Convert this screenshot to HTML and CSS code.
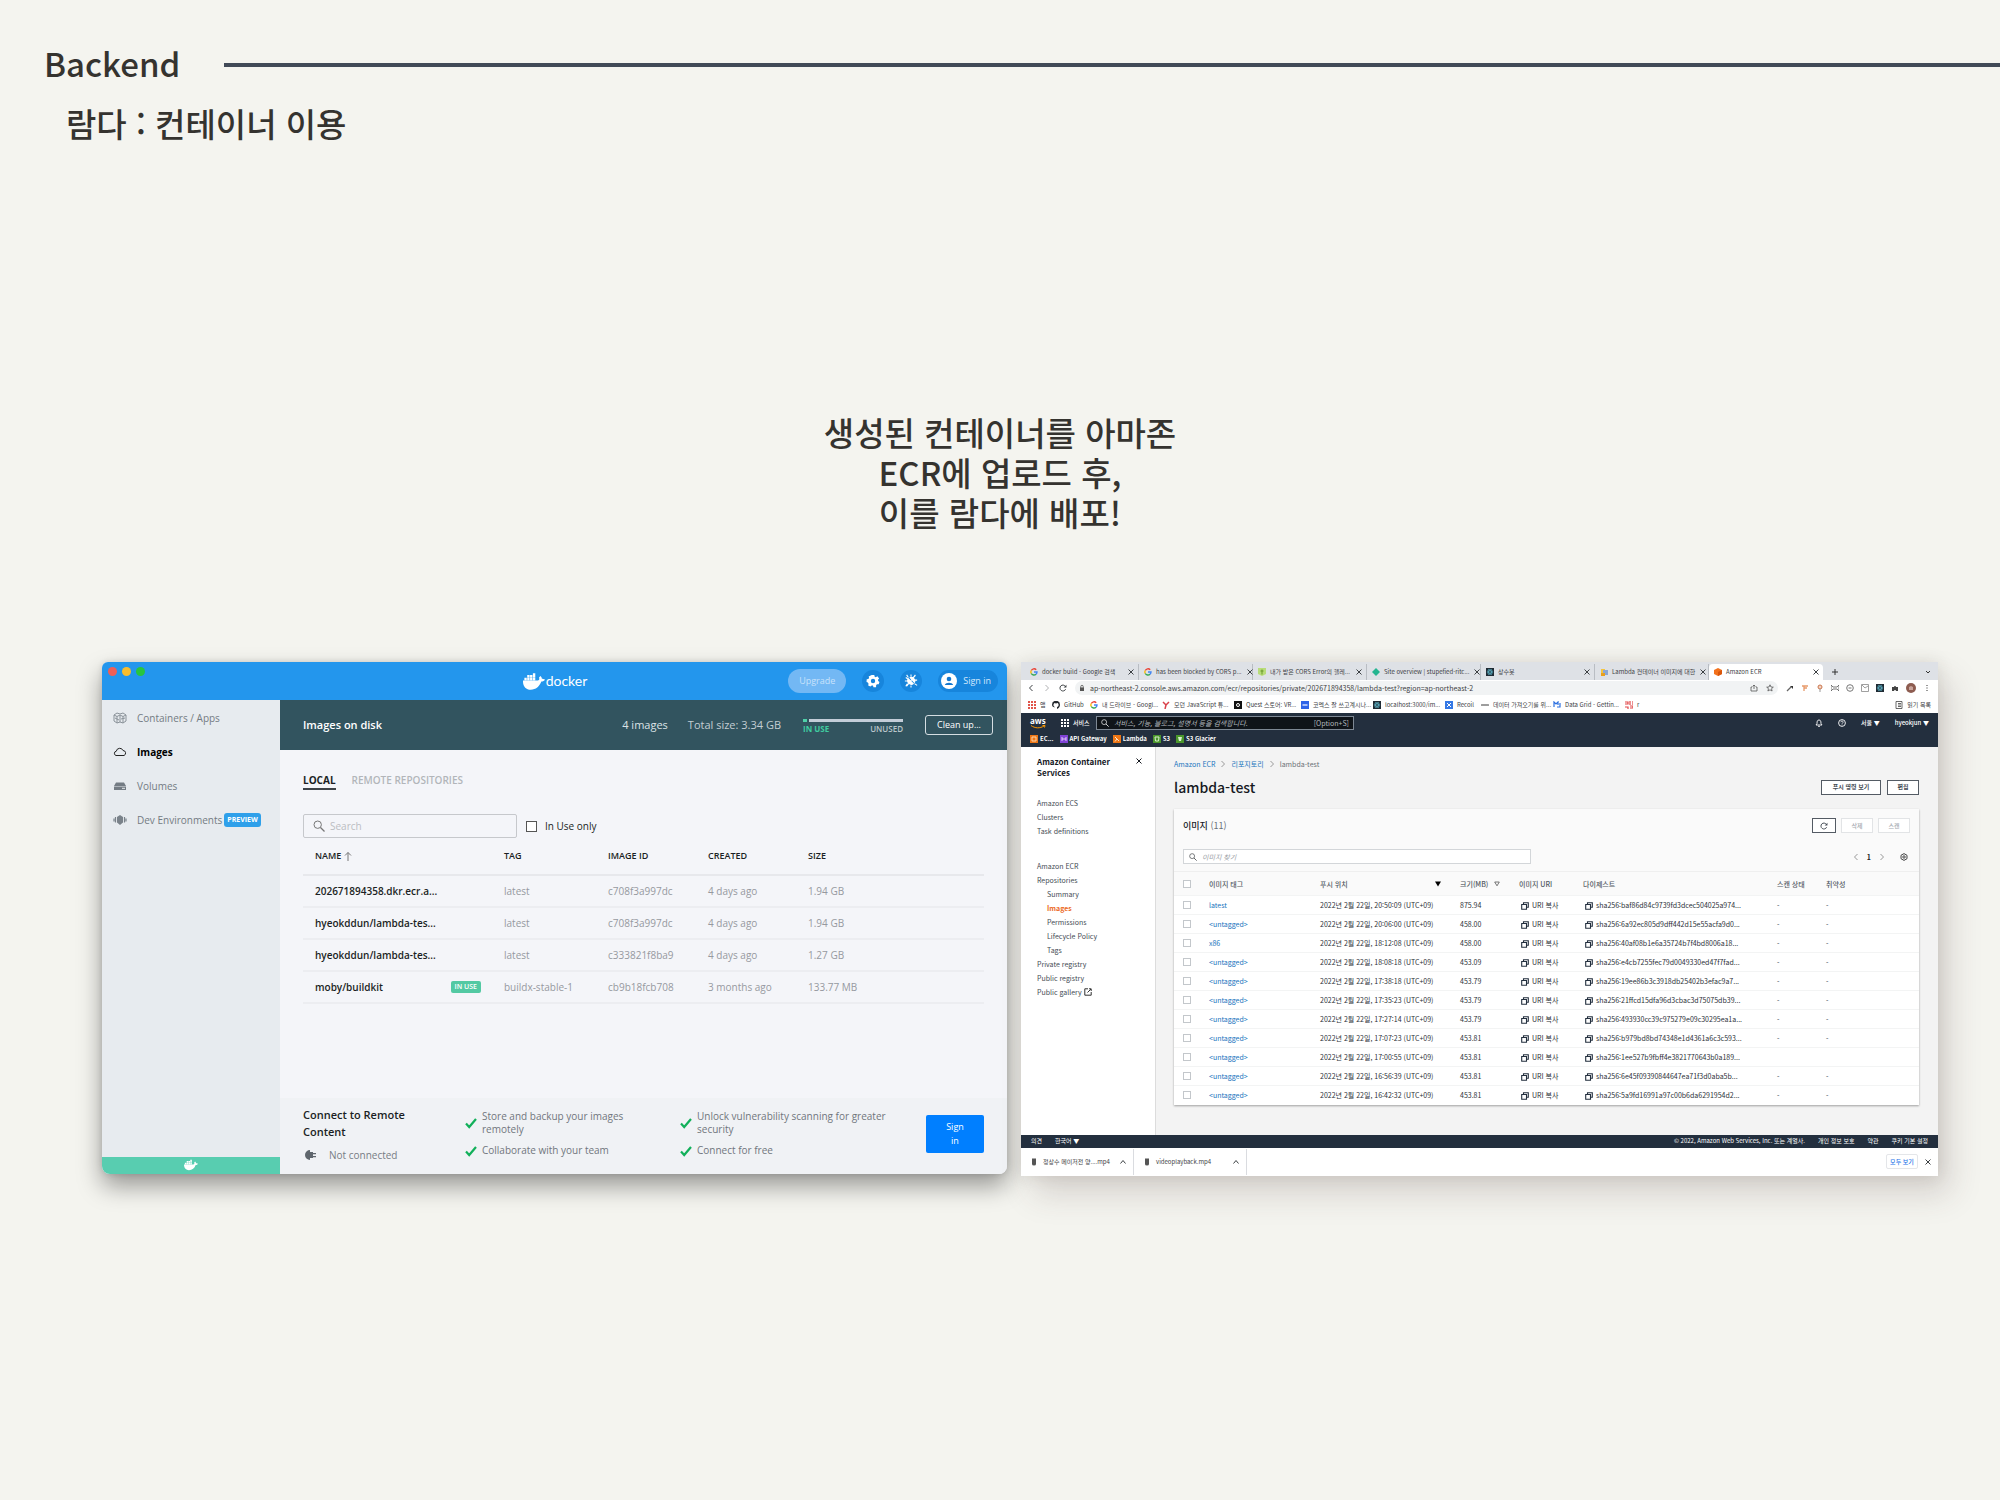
FILE: index.html
```html
<!DOCTYPE html>
<html lang="ko">
<head>
<meta charset="utf-8">
<meta name="viewport" content="width=device-width, initial-scale=1">
<title>Backend</title>
<link rel="stylesheet" href="styles.css">
</head>
<body>
<svg class="defs" aria-hidden="true">
  <symbol id="whale" viewBox="0 0 24 18"><path d="M0 8h16c2 0 2-2 1.500-3.500L19 3c1.200 1 1.500 2 1.600 3 1 0 2 .2 3.400.9-.8 1.700-2.200 2.200-4 2.200C18 14.500 14 18 8.500 18 3 18-.3 14 0 8zM1.500 5h2.600v2.500H1.500zM4.600 5h2.600v2.500H4.600zM7.700 5h2.600v2.500H7.700zM10.800 5h2.600v2.500h-2.600zM4.600 2h2.600v2.500H4.600zM7.700 2h2.600v2.500H7.700zM10.800 0h2.600v4.500h-2.600z"/></symbol>
  <symbol id="check" viewBox="0 0 12 12"><path d="M1 6.500 4.200 10 11 2" fill="none" stroke="#12b05a" stroke-width="2.200"/></symbol>
  <symbol id="copy" viewBox="0 0 8 8"><path d="M2.500 2V.7h4.800v4.600H6M.7 2.500H5.500v4.800H.7z" fill="none" stroke="#232f3e" stroke-width="1.100"/></symbol>
  <symbol id="lens" viewBox="0 0 12 12"><circle cx="4.700" cy="4.700" r="3.700" fill="none" stroke="currentColor"/><path d="m7.500 7.500 4 4" stroke="currentColor" stroke-width="1.200"/></symbol>
  <symbol id="google" viewBox="0 0 8 8"><g fill="none" stroke-width="1.400"><path d="M1.300 2.500A3 3 0 0 1 6.200 1.800" stroke="#ea4335"/><path d="M1.300 2.500a3 3 0 0 0 0 3" stroke="#fbbc05"/><path d="M1.300 5.500A3 3 0 0 0 6 6.200" stroke="#34a853"/><path d="M6 6.200A3 3 0 0 0 7 4H4" stroke="#4285f4"/></g></symbol>
  <symbol id="react" viewBox="0 0 8 8"><path fill="#1f2a33" d="M0 0h8v8H0z"/><g fill="none" stroke="#5fb6c9" stroke-width=".6"><ellipse cx="4" cy="4" rx="3" ry="1.200"/><ellipse cx="4" cy="4" rx="3" ry="1.200" transform="rotate(60 4 4)"/><ellipse cx="4" cy="4" rx="3" ry="1.200" transform="rotate(120 4 4)"/></g></symbol>
  <symbol id="x" viewBox="0 0 8 8"><path d="m1.500 1.500 5 5m0-5-5 5" stroke="currentColor" fill="none"/></symbol>
  <symbol id="left" viewBox="0 0 8 8"><path d="M5.500 1 2.500 4l3 3" stroke="currentColor" fill="none"/></symbol>
  <symbol id="right" viewBox="0 0 8 8"><path d="m2.500 1 3 3-3 3" stroke="currentColor" fill="none"/></symbol>
  <symbol id="up" viewBox="0 0 8 8"><path d="m1.500 5.500 2.500-3 2.500 3" stroke="currentColor" fill="none"/></symbol>
  <symbol id="reload" viewBox="0 0 10 10"><path d="M8.300 6.500A3.700 3.700 0 1 1 8 3" stroke="currentColor" stroke-width="1.200" fill="none"/><path d="M9.300.8v3.500H5.800z" fill="currentColor"/></symbol>
  <symbol id="gear" viewBox="0 0 16 16"><path fill="currentColor" fill-rule="evenodd" d="M6.500 1h3l.4 2 1.300.6L13 2.500 15 5l-1.300 1.500.2 1.500 1.500 1-.9 2.800-1.900-.1-1 1L11.500 15h-3L8 13.200 6.500 13 5 14.300 2.500 13l.4-2-.8-1.200L.6 9l.2-3 1.900-.4.9-1.200-.6-1.600zM8 5.500a2.500 2.500 0 1 0 0 5 2.500 2.500 0 0 0 0-5z"/></symbol>
  <symbol id="file" viewBox="0 0 8 8"><path d="M2 .5h4v5.500a2 1.500 0 0 1-4 0z" fill="#555"/></symbol>
</svg>

<header class="slide-head">
  <h1>Backend</h1>
  <hr class="rule">
</header>
<h2 class="subtitle">람다 : 컨테이너 이용</h2>
<p class="message">생성된 컨테이너를 아마존<br>ECR에 업로드 후,<br>이를 람다에 배포!</p>

<main class="shots">
  <section class="docker" aria-label="Docker Desktop">
    <header class="d-bar">
      <div class="lights"><i class="red"></i><i class="yellow"></i><i class="green"></i></div>
      <div class="d-logo"><svg class="d-whale"><use href="#whale"/></svg>docker</div>
      <div class="d-actions">
        <button class="upgrade">Upgrade</button>
        <button class="round" aria-label="Settings"><svg class="i14"><use href="#gear"/></svg></button>
        <button class="round" aria-label="Troubleshoot"><svg class="i14" viewBox="0 0 16 16"><path d="M5 4.500 11.500 11A4.500 4.500 0 0 1 5 4.500zM6 4a4.500 4.500 0 0 1 6 6.500z" fill="#fff"/><path d="m3 1 2 3M8 .5V3m5-1.500L11 4m4 3h-3m3 6-3-2M8 13v2.500M4 11l-2 3M1 8h3m-2-4 3 2m8-5L3 14" stroke="#fff" stroke-width="1.200"/></svg></button>
        <button class="signin-pill"><svg class="i16" viewBox="0 0 16 16"><circle cx="8" cy="8" r="8" fill="#fff"/><circle cx="8" cy="6" r="2.300" fill="#1478cf"/><path d="M3.800 12c1-3 7.400-3 8.400 0z" fill="#1478cf"/></svg>Sign in</button>
      </div>
    </header>
    <div class="d-body">
      <aside class="d-side">
        <nav>
          <a href="#"><svg class="i14" viewBox="0 0 14 14"><path d="m1 4 3-2 3 1 3-1 3 2v6l-3 2-3-1-3 1-3-2zM1 4l3 1.500L7 4l3 1.500L13 4M4 5.500V12m6-6.500V12M7 4v7M2 7l4 2m2-1 4-1" fill="none" stroke="#8a9299"/></svg>Containers / Apps</a>
          <a href="#" class="on"><svg class="i14" viewBox="0 0 14 14"><path d="M3 10.500a2.200 2.200 0 0 1 .3-4.300 3.500 3.500 0 0 1 6.700-.7 2.600 2.600 0 0 1 1 5z" fill="none" stroke="#222"/></svg>Images</a>
          <a href="#"><svg class="i14" viewBox="0 0 14 14"><path d="m3 3.500h8l2 3.500H1zM1 7.500h12v3.500H1z" fill="#747c84"/><path d="M9 9.300h3" stroke="#e8ebee"/></svg>Volumes</a>
          <a href="#"><svg class="i14" viewBox="0 0 14 14"><path d="m4 4 3-2 3 2v5.500L7 12 4 9.500z" fill="#7a828a"/><path d="M1 5.500v3M2.500 4v5.500m9-5.500v5.500M13 5.500v3" stroke="#7a828a" stroke-width="1.200"/></svg>Dev Environments<span class="preview">PREVIEW</span></a>
        </nav>
        <div class="d-status"><svg class="i14"><use href="#whale"/></svg></div>
      </aside>
      <div class="d-main">
        <div class="disk">
          <h3>Images on disk</h3>
          <span>4 images</span>
          <span class="d-total">Total size: 3.34 GB</span>
          <div class="usage"><div class="meter"><i></i><b></b></div><div class="usage-labels"><em>IN USE</em><span>UNUSED</span></div></div>
          <button class="clean">Clean up...</button>
        </div>
        <div class="d-content">
          <nav class="d-tabs"><a href="#" class="on">LOCAL</a><a href="#">REMOTE REPOSITORIES</a></nav>
          <div class="d-filter">
            <div class="d-search"><svg class="i12"><use href="#lens"/></svg><input type="text" placeholder="Search" aria-label="Search images"></div>
            <label><input type="checkbox">In Use only</label>
          </div>
          <table class="d-table">
            <colgroup><col class="c-name"><col class="c-tag"><col class="c-id"><col class="c-created"><col></colgroup>
            <thead><tr><th>NAME <svg class="sort" viewBox="0 0 8 10"><path d="M4 10V1.500M1 4.500l3-3 3 3" fill="none" stroke="#777"/></svg></th><th>TAG</th><th>IMAGE ID</th><th>CREATED</th><th>SIZE</th></tr></thead>
            <tbody>
              <tr><td>202671894358.dkr.ecr.a...</td><td>latest</td><td>c708f3a997dc</td><td>4 days ago</td><td>1.94 GB</td></tr>
              <tr><td>hyeokddun/lambda-tes...</td><td>latest</td><td>c708f3a997dc</td><td>4 days ago</td><td>1.94 GB</td></tr>
              <tr><td>hyeokddun/lambda-tes...</td><td>latest</td><td>c333821f8ba9</td><td>4 days ago</td><td>1.27 GB</td></tr>
              <tr><td><div class="name-cell">moby/buildkit<span class="inuse">IN USE</span></div></td><td>buildx-stable-1</td><td>cb9b18fcb708</td><td>3 months ago</td><td>133.77 MB</td></tr>
            </tbody>
          </table>
        </div>
        <footer class="connect">
          <div class="remote"><h4>Connect to Remote Content</h4><p><svg class="i14" viewBox="0 0 14 14"><path d="M7 2a5 5 0 1 0 0 10zM7 4h3v6H7zM10 5h3v1.200h-3zM10 8h3v1.200h-3z" fill="#5f666d"/></svg>Not connected</p></div>
          <ul>
            <li><svg class="i12"><use href="#check"/></svg><span>Store and backup your images remotely</span></li>
            <li><svg class="i12"><use href="#check"/></svg><span>Unlock vulnerability scanning for greater security</span></li>
            <li><svg class="i12"><use href="#check"/></svg><span>Collaborate with your team</span></li>
            <li><svg class="i12"><use href="#check"/></svg><span>Connect for free</span></li>
          </ul>
          <button class="signin">Sign in</button>
        </footer>
      </div>
    </div>
  </section>

  <section class="browser" aria-label="Amazon ECR">
    <div class="tabs">
      <div class="tab"><svg class="i8"><use href="#google"/></svg><span>docker build - Google 검색</span><svg class="i8"><use href="#x"/></svg></div>
      <div class="tab"><svg class="i8"><use href="#google"/></svg><span>has been blocked by CORS p...</span><svg class="i8"><use href="#x"/></svg></div>
      <div class="tab"><svg class="i8" viewBox="0 0 8 8"><path d="M0 0h8v6L4 8 0 6z" fill="#b8dc7a"/><path d="M4 1.500v5M2.500 3h3" stroke="#6a9a2a"/></svg><span>내가 받은 CORS Error의 헬레...</span><svg class="i8"><use href="#x"/></svg></div>
      <div class="tab"><svg class="i8" viewBox="0 0 8 8"><path d="m4 0 4 4-4 4-4-4z" fill="#25b590"/></svg><span>Site overview | stupefied-ritc...</span><svg class="i8"><use href="#x"/></svg></div>
      <div class="tab"><svg class="i8"><use href="#react"/></svg><span>상수봇</span><svg class="i8"><use href="#x"/></svg></div>
      <div class="tab"><svg class="i8" viewBox="0 0 8 8"><path d="M1 1h4v5H1z" fill="#f4c542"/><path d="M3 2h5v5H3z" fill="#8aa7d6"/><path d="M1 5h4v3H1z" fill="#e8a020"/></svg><span>Lambda 컨테이너 이미지에 대한</span><svg class="i8"><use href="#x"/></svg></div>
      <div class="tab on"><svg class="i8" viewBox="0 0 8 8"><path d="m4 0 4 2v4L4 8 0 6V2z" fill="#f2711c"/><path d="m4 4 4-2v4L4 8z" fill="#d9560b"/></svg><span>Amazon ECR</span><svg class="i8"><use href="#x"/></svg></div>
      <button class="plus" aria-label="New tab"><svg class="i8" viewBox="0 0 8 8"><path d="M4 1v6M1 4h6" stroke="#333"/></svg></button>
      <svg class="i8 more" viewBox="0 0 8 8"><path d="m2 3 2 2 2-2" fill="none" stroke="#333"/></svg>
    </div>
    <div class="toolbar">
      <svg class="i8"><use href="#left"/></svg><svg class="i8 faint"><use href="#right"/></svg><svg class="i8"><use href="#reload"/></svg>
      <div class="url"><svg class="i8" viewBox="0 0 8 8"><path d="M2 3.500h4V7H2z" fill="#555"/><path d="M2.800 4V2.500a1.200 1.200 0 0 1 2.400 0V4" fill="none" stroke="#555" stroke-width=".8"/></svg><input type="text" aria-label="Address" value="ap-northeast-2.console.aws.amazon.com/ecr/repositories/private/202671894358/lambda-test?region=ap-northeast-2"><svg class="i8" viewBox="0 0 8 8"><path d="M2 3H1v4h6V3H6M4 5V1M2.500 2.500 4 1l1.500 1.500" fill="none" stroke="#555" stroke-width=".8"/></svg><svg class="i8" viewBox="0 0 8 8"><path d="m4 .8 1 2.200 2.300.2-1.800 1.500.6 2.300L4 5.800 1.900 7l.6-2.300L.7 3.200 3 3z" fill="none" stroke="#555" stroke-width=".8"/></svg></div>
      <div class="exts">
        <svg class="i8" viewBox="0 0 8 8"><path d="m1 7 4-4" stroke="#666" stroke-width="1.300"/><path d="M4 2h3v3z" fill="#333"/></svg>
        <svg class="i8" viewBox="0 0 8 8"><path d="M1 2h6M3 2v5m0-3h3" stroke="#e79a6b" stroke-width="1.300"/></svg>
        <svg class="i8" viewBox="0 0 8 8"><circle cx="4" cy="3" r="2" fill="#f5d3c2" stroke="#c9764d"/><path d="M4 5v3" stroke="#999"/></svg>
        <svg class="i8" viewBox="0 0 8 8"><path d="M0 1v6m8-6v6M0 1l2 2h4l2-2M0 7l2-2h4l2 2" fill="none" stroke="#555" stroke-width=".8"/></svg>
        <svg class="i8" viewBox="0 0 8 8"><circle cx="4" cy="4" r="3.300" fill="none" stroke="#777"/><path d="M2.500 4h3" stroke="#777"/></svg>
        <svg class="i8" viewBox="0 0 8 8"><path d="M.5.500h7v7h-7zM1 1l3 3 3-2" fill="none" stroke="#888" stroke-width=".8"/></svg>
        <svg class="i8"><use href="#react"/></svg>
        <svg class="i8" viewBox="0 0 8 8"><path d="M1 3h2a1 1 0 1 1 2 0h2v4H5a1 1 0 0 0-2 0H1z" fill="#444"/></svg>
        <svg class="i10" viewBox="0 0 10 10"><circle cx="5" cy="5" r="5" fill="#8d5c50"/><path d="M3 7V4l2-1 2 1v3z" fill="#c9a59c"/></svg>
        <svg class="i8" viewBox="0 0 8 8"><path d="M3.500 1h1v1h-1zM3.500 3.500h1v1h-1zM3.500 6h1v1h-1z" fill="#333"/></svg>
      </div>
    </div>
    <nav class="bookmarks">
      <a href="#" class="apps"><svg class="i8" viewBox="0 0 8 8"><path d="M0 1h8M0 4h8M0 7h8" stroke="#e0554a" stroke-width="2" stroke-dasharray="2 1"/></svg>앱</a>
      <a href="#" class="bm-s"><svg class="i8" viewBox="0 0 8 8"><path d="M3 8V6.200C1 6.500 0 5 0 3.800a4 4 0 0 1 8 0C8 5.500 7 7.500 5 8V6c2-.2 2-3.500.5-4L4 2.500 2.500 2C1 3 1 5.500 3 6z" fill="#24292e"/></svg>GitHub</a>
      <a href="#" class="bm-l"><svg class="i8"><use href="#google"/></svg>내 드라이브 - Googl...</a>
      <a href="#" class="bm-l"><svg class="i8" viewBox="0 0 8 8"><path d="m1 1 3 3 3-3M4 4 3 8" fill="none" stroke="#d9404a" stroke-width="1.500"/></svg>모던 JavaScript 튜...</a>
      <a href="#" class="bm-m"><svg class="i8" viewBox="0 0 8 8"><path d="M0 0h8v8H0z" fill="#111"/><circle cx="4" cy="4" r="1.500" fill="none" stroke="#fff"/></svg>Quest 스토어: VR...</a>
      <a href="#" class="bm-l"><svg class="i8" viewBox="0 0 8 8"><path d="M0 0h8v8H0z" fill="#2d63e8"/><path d="M1.500 4h5" stroke="#cfdcff" stroke-width="1.500"/></svg>코멕스 잘 쓰고계시나...</a>
      <a href="#" class="bm-l"><svg class="i8"><use href="#react"/></svg>localhost:3000/im...</a>
      <a href="#" class="bm-xs"><svg class="i8" viewBox="0 0 8 8"><path d="M0 0h8v8H0z" fill="#3578e5"/><path d="m2 2 4 4m0-4L2 6" stroke="#fff"/></svg>Recoil</a>
      <a href="#" class="bm-l"><svg class="i8" viewBox="0 0 8 8"><path d="m0 3 1 2 1-2 1 2 1-2 1 2 1-2 1 2 1-2" fill="none" stroke="#888"/></svg>데이터 가져오기를 위...</a>
      <a href="#" class="bm-l"><svg class="i8" viewBox="0 0 8 8"><path d="M1 6V1l2 2 2-2v3M4 6h3V2" fill="none" stroke="#2b6fe0" stroke-width="1.200"/></svg>Data Grid - Gettin...</a>
      <a href="#" class="bm-s"><svg class="i8" viewBox="0 0 8 8"><path d="M0 1h3v2H0M5 0v4M8 0v4M0 6h3v2M5 5h3v2H5" fill="none" stroke="#e2484a" stroke-width="1.200"/></svg>r</a>
      <a href="#" class="read"><svg class="i8" viewBox="0 0 8 8"><path d="M1 .5h6v7H1zM3 2.500h3M3 4h3M3 5.500h3" fill="none" stroke="#444" stroke-width=".8"/></svg>읽기 목록</a>
    </nav>
    <div class="aws-nav">
      <div class="aws-row">
        <a href="#" class="aws-logo">aws<svg viewBox="0 0 16 4"><path d="M1 .5c4 3 9 3 13 .5M12.500.5H15l-.5 2" fill="none" stroke="#ff9900"/></svg></a>
        <a href="#" class="svc"><svg class="i8" viewBox="0 0 8 8"><path d="M0 1h8M0 4h8M0 7h8" stroke="#fff" stroke-width="2" stroke-dasharray="2 1"/></svg>서비스</a>
        <div class="aws-search"><svg class="i8"><use href="#lens"/></svg><input type="text" aria-label="AWS search" placeholder="서비스, 기능, 블로그, 설명서 등을 검색합니다."><kbd>[Option+S]</kbd></div>
        <div class="aws-user"><svg class="i8" viewBox="0 0 8 8"><path d="M1 6h6L6 4.500C6 2 5.500 1 4 1S2 2 2 4.500zM3 7.300h2" fill="none" stroke="#fff" stroke-width=".9"/></svg><svg class="i8" viewBox="0 0 8 8"><circle cx="4" cy="4" r="3.400" fill="none" stroke="#fff" stroke-width=".9"/><path d="M2.800 3.200c0-1.500 2.500-1.500 2.400 0 0 .8-1.200.6-1.200 1.600M4 5.500v.8" fill="none" stroke="#fff" stroke-width=".8"/></svg><a href="#">서울 ▼</a><a href="#">hyeokjun ▼</a></div>
      </div>
      <div class="favs">
        <a href="#"><svg class="i8" viewBox="0 0 8 8"><path d="M0 0h8v8H0z" fill="#ed7615"/><path d="M2 2h4v4H2z" fill="none" stroke="#fbd3ab"/></svg>EC...</a>
        <a href="#"><svg class="i8" viewBox="0 0 8 8"><path d="M0 0h8v8H0z" fill="#8043d6"/><path d="M2 2v4m4-4v4M2 4h4" stroke="#e0cff7"/></svg>API Gateway</a>
        <a href="#"><svg class="i8" viewBox="0 0 8 8"><path d="M0 0h8v8H0z" fill="#ed7615"/><path d="m2 2 4 4M4 4 2 6.500" stroke="#fde3c9"/></svg>Lambda</a>
        <a href="#"><svg class="i8" viewBox="0 0 8 8"><path d="M0 0h8v8H0z" fill="#4a962b"/><path d="M2 2h4L5.500 6h-3z" fill="none" stroke="#d9efcd"/></svg>S3</a>
        <a href="#"><svg class="i8" viewBox="0 0 8 8"><path d="M0 0h8v8H0z" fill="#4a962b"/><path d="M2 2h4L5 6H3z" fill="#d9efcd"/></svg>S3 Glacier</a>
      </div>
    </div>
    <div class="aws-body">
      <aside class="aws-side">
        <div class="side-head"><h3>Amazon Container Services</h3><svg class="i8"><use href="#x"/></svg></div>
        <nav>
          <a href="#">Amazon ECS</a><a href="#">Clusters</a><a href="#">Task definitions</a>
        </nav>
        <nav>
          <a href="#">Amazon ECR</a><a href="#">Repositories</a>
          <a href="#" class="sub">Summary</a><a href="#" class="sub on">Images</a><a href="#" class="sub">Permissions</a><a href="#" class="sub">Lifecycle Policy</a><a href="#" class="sub">Tags</a>
          <a href="#">Private registry</a><a href="#">Public registry</a><a href="#">Public gallery <svg class="i8" viewBox="0 0 8 8"><path d="M4 .8H.8v6.400h6.400V4M5 .8h2.200V3M7 1 3.500 4.500" fill="none" stroke="#333"/></svg></a>
        </nav>
      </aside>
      <div class="aws-main">
        <nav class="crumbs"><a href="#">Amazon ECR</a><svg class="i8"><use href="#right"/></svg><a href="#">리포지토리</a><svg class="i8"><use href="#right"/></svg><span>lambda-test</span></nav>
        <div class="title-row"><h2>lambda-test</h2><button class="btn b-wide">푸시 명령 보기</button><button class="btn">편집</button></div>
        <div class="card">
          <div class="card-head">
            <div class="card-title"><h3>이미지 <span>(11)</span></h3><button class="btn b-icon" aria-label="Refresh"><svg class="i8"><use href="#reload"/></svg></button><button class="btn" disabled>삭제</button><button class="btn" disabled>스캔</button></div>
            <div class="card-filter"><div class="find"><svg class="i8"><use href="#lens"/></svg><input type="text" aria-label="Find images" placeholder="이미지 찾기"></div><div class="pager"><svg class="i8"><use href="#left"/></svg><b>1</b><svg class="i8"><use href="#right"/></svg><svg class="i8 cog" viewBox="0 0 8 8"><path d="m4 .6 3 1.700v3.400L4 7.400 1 5.700V2.300z" fill="none" stroke="#444"/><circle cx="4" cy="4" r="1.200" fill="none" stroke="#444"/></svg></div></div>
          </div>
          <table class="images">
            <colgroup><col class="a-check"><col class="a-tag"><col class="a-date"><col class="a-size"><col class="a-uri"><col class="a-sha"><col class="a-scan"><col></colgroup>
            <thead><tr><th><input type="checkbox" aria-label="Select all"></th><th>이미지 태그</th><th><div class="th-sort">푸시 위치<svg class="i6" viewBox="0 0 6 6"><path d="M0 .5h6l-3 5z"/></svg></div></th><th><div class="th-sort">크기(MB)<svg class="i6" viewBox="0 0 6 6"><path d="M.7 1h4.600L3 4.800z" fill="none" stroke="#555" stroke-width=".8"/></svg></div></th><th>이미지 URI</th><th>다이제스트</th><th>스캔 상태</th><th>취약성</th></tr></thead>
            <tbody>
              <tr><td><input type="checkbox" aria-label="Select"></td><td><a href="#">latest</a></td><td>2022년 2월 22일, 20:50:09 (UTC+09)</td><td>875.94</td><td><svg class="i8"><use href="#copy"/></svg>URI 복사</td><td><svg class="i8"><use href="#copy"/></svg>sha256:baf86d84c9739fd3dcec504025a974...</td><td>-</td><td>-</td></tr>
              <tr><td><input type="checkbox" aria-label="Select"></td><td><a href="#">&lt;untagged&gt;</a></td><td>2022년 2월 22일, 20:06:00 (UTC+09)</td><td>458.00</td><td><svg class="i8"><use href="#copy"/></svg>URI 복사</td><td><svg class="i8"><use href="#copy"/></svg>sha256:6a92ec805d9dff442d15e55acfa9d0...</td><td>-</td><td>-</td></tr>
              <tr><td><input type="checkbox" aria-label="Select"></td><td><a href="#">x86</a></td><td>2022년 2월 22일, 18:12:08 (UTC+09)</td><td>458.00</td><td><svg class="i8"><use href="#copy"/></svg>URI 복사</td><td><svg class="i8"><use href="#copy"/></svg>sha256:40af08b1e6a35724b7f4bd8006a18...</td><td>-</td><td>-</td></tr>
              <tr><td><input type="checkbox" aria-label="Select"></td><td><a href="#">&lt;untagged&gt;</a></td><td>2022년 2월 22일, 18:08:18 (UTC+09)</td><td>453.09</td><td><svg class="i8"><use href="#copy"/></svg>URI 복사</td><td><svg class="i8"><use href="#copy"/></svg>sha256:e4cb7255fec79d0049330ed47f7fad...</td><td>-</td><td>-</td></tr>
              <tr><td><input type="checkbox" aria-label="Select"></td><td><a href="#">&lt;untagged&gt;</a></td><td>2022년 2월 22일, 17:38:18 (UTC+09)</td><td>453.79</td><td><svg class="i8"><use href="#copy"/></svg>URI 복사</td><td><svg class="i8"><use href="#copy"/></svg>sha256:19ee86b3c3918db25402b3efac9a7...</td><td>-</td><td>-</td></tr>
              <tr><td><input type="checkbox" aria-label="Select"></td><td><a href="#">&lt;untagged&gt;</a></td><td>2022년 2월 22일, 17:35:23 (UTC+09)</td><td>453.79</td><td><svg class="i8"><use href="#copy"/></svg>URI 복사</td><td><svg class="i8"><use href="#copy"/></svg>sha256:21ffcd15dfa96d3cbac3d75075db39...</td><td>-</td><td>-</td></tr>
              <tr><td><input type="checkbox" aria-label="Select"></td><td><a href="#">&lt;untagged&gt;</a></td><td>2022년 2월 22일, 17:27:14 (UTC+09)</td><td>453.79</td><td><svg class="i8"><use href="#copy"/></svg>URI 복사</td><td><svg class="i8"><use href="#copy"/></svg>sha256:493930cc39c975279e09c30295ea1a...</td><td>-</td><td>-</td></tr>
              <tr><td><input type="checkbox" aria-label="Select"></td><td><a href="#">&lt;untagged&gt;</a></td><td>2022년 2월 22일, 17:07:23 (UTC+09)</td><td>453.81</td><td><svg class="i8"><use href="#copy"/></svg>URI 복사</td><td><svg class="i8"><use href="#copy"/></svg>sha256:b979bd8bd74348e1d4361a6c3c593...</td><td>-</td><td>-</td></tr>
              <tr><td><input type="checkbox" aria-label="Select"></td><td><a href="#">&lt;untagged&gt;</a></td><td>2022년 2월 22일, 17:00:55 (UTC+09)</td><td>453.81</td><td><svg class="i8"><use href="#copy"/></svg>URI 복사</td><td><svg class="i8"><use href="#copy"/></svg>sha256:1ee527b9fbff4e3821770643b0a189...</td><td></td><td></td></tr>
              <tr><td><input type="checkbox" aria-label="Select"></td><td><a href="#">&lt;untagged&gt;</a></td><td>2022년 2월 22일, 16:56:39 (UTC+09)</td><td>453.81</td><td><svg class="i8"><use href="#copy"/></svg>URI 복사</td><td><svg class="i8"><use href="#copy"/></svg>sha256:6e45f09390844647ea71f3d0aba5b...</td><td>-</td><td>-</td></tr>
              <tr><td><input type="checkbox" aria-label="Select"></td><td><a href="#">&lt;untagged&gt;</a></td><td>2022년 2월 22일, 16:42:32 (UTC+09)</td><td>453.81</td><td><svg class="i8"><use href="#copy"/></svg>URI 복사</td><td><svg class="i8"><use href="#copy"/></svg>sha256:5a9fd16991a97c00b6da6291954d2...</td><td>-</td><td>-</td></tr>
            </tbody>
          </table>
        </div>
      </div>
    </div>
    <footer class="aws-foot"><a href="#">의견</a><a href="#">한국어 ▼</a><span class="legal">© 2022, Amazon Web Services, Inc. 또는 계열사.</span><a href="#">개인 정보 보호</a><a href="#">약관</a><a href="#">쿠키 기본 설정</a></footer>
    <div class="downloads">
      <div class="dl"><svg class="i8"><use href="#file"/></svg><span>정상수 메이저전 양....mp4</span><svg class="i8"><use href="#up"/></svg></div>
      <div class="dl"><svg class="i8"><use href="#file"/></svg><span>videoplayback.mp4</span><svg class="i8"><use href="#up"/></svg></div>
      <button class="all">모두 보기</button>
      <svg class="i8"><use href="#x"/></svg>
    </div>
  </section>
</main>
</body>
</html>
```

FILE: styles.css
```css
* { box-sizing: border-box; }
body {
  margin: 0;
  min-height: 100vh;
  background: #f4f4ef;
  color: #35332f;
  font-family: "Noto Sans CJK KR", sans-serif;
  overflow-x: hidden;
}
h1, h2, h3, h4, p, ul { margin: 0; padding: 0; font-weight: 500; }
ul { list-style: none; }
a { color: inherit; text-decoration: none; }
svg { flex: none; display: block; }
button, input { font: inherit; color: inherit; margin: 0; padding: 0; border: 0; background: none; }
input[type="text"] { min-width: 0; flex: 1; outline: 0; }
input[type="checkbox"] { appearance: none; display: block; flex: none; background: #fff; }
.defs { display: none; }
.i6 { width: 6px; height: 6px; }
.i8 { width: 8px; height: 8px; }
.i10 { width: 10px; height: 10px; }
.i12 { width: 12px; height: 12px; }
.i14 { width: 14px; height: 14px; }
.i16 { width: 16px; height: 16px; }

/* Slide text */
.slide-head { display: flex; align-items: center; gap: 44px; padding: 40px 0 0 44px; }
.slide-head h1 { padding-bottom: 4px; font-size: 33px; line-height: 46px; }
.rule { flex: 1; height: 4px; margin: 0; border: 0; background: #414a57; }
.subtitle { padding: 8px 0 0 66px; font-size: 33px; line-height: 50px; }
.message { padding-top: 264px; text-align: center; font-size: 33px; line-height: 40px; }

/* Two windows side by side */
.shots { display: grid; grid-template-columns: 905fr 917fr; gap: 14px; padding: 130px 62px 60px 102px; }

/* Docker window */
.docker {
  display: flex; flex-direction: column;
  border-radius: 6px 6px 8px 8px; overflow: hidden;
  background: #f4f5f9; color: #1b1f24;
  font: 11px/14px "Open Sans", sans-serif;
  box-shadow: 0 12px 24px rgba(0, 0, 0, .38), 0 0 6px rgba(0, 0, 0, .12);
  margin-bottom: 2px;
}
.d-bar { display: grid; grid-template-columns: 1fr auto 1fr; align-items: center; height: 38px; padding: 0 9px 0 6px; background: #2396ed; color: #fff; }
.lights { display: flex; gap: 5px; align-self: start; padding-top: 5px; }
.lights i { width: 9px; height: 9px; border-radius: 50%; }
.red { background: #ee5f57; }
.yellow { background: #f8bd2e; }
.green { background: #27c53f; }
.d-logo { display: flex; align-items: center; gap: 1px; padding-left: 4px; font: 14px/16px Lato, sans-serif; }
.d-whale { width: 22px; height: 17px; fill: #fff; }
.d-status svg { fill: #fff; }
.d-actions { display: flex; align-items: center; justify-content: flex-end; gap: 16px; font-size: 9px; }
.upgrade { width: 58px; height: 24px; border-radius: 12px; background: #73b8f4; color: #c8e2fb; }
.round { display: grid; place-items: center; width: 22px; height: 22px; border-radius: 50%; background: #1785dc; }
.signin-pill { display: flex; align-items: center; gap: 6px; height: 22px; padding: 0 7px 0 3px; border-radius: 11px; background: #1785dc; color: #d4e9fc; }
.d-body { display: flex; flex: 1; }
.d-side { display: flex; flex-direction: column; justify-content: space-between; width: 178px; background: #e7ebef; color: #747b83; }
.d-side nav { padding-top: 1px; }
.d-side nav a { display: flex; align-items: center; gap: 10px; height: 34px; padding-left: 11px; font-size: 10px; white-space: nowrap; }
.d-side .on { color: #000; font-weight: 700; }
.preview { margin-left: -8px; padding: 0 3px; border-radius: 3px; background: #2fa0ea; color: #fff; font-size: 7px; font-weight: 700; }
.d-status { display: flex; justify-content: center; align-items: center; height: 17px; background: #58cdb0; }
.d-main { flex: 1; display: flex; flex-direction: column; }
.disk { display: flex; align-items: center; height: 50px; padding: 0 14px 0 23px; background: #32545f; color: #dbe3e6; font-size: 11px; }
.disk h3 { flex: 1; color: #fff; font-size: 11px; font-weight: 600; }
.d-total { margin: 0 22px 0 20px; color: #c3ced3; }
.usage { width: 100px; }
.meter { display: flex; gap: 2px; padding-top: 4px; }
.meter i { width: 4px; height: 3px; background: #4fd0a8; }
.meter b { flex: 1; height: 3px; background: #c3cdd8; }
.usage-labels { display: flex; justify-content: space-between; color: #b9c5ca; font-size: 8px; line-height: 13px; font-weight: 600; }
.usage-labels em { color: #3fcba0; font-style: normal; font-weight: 700; }
.clean { width: 68px; height: 20px; margin-left: 22px; border: 1px solid #d5dee2; border-radius: 3px; color: #fff; font-size: 9px; }
.d-content { flex: 1; padding: 22px 23px 0; }
.d-tabs { display: flex; gap: 16px; font-size: 10px; line-height: 16px; font-weight: 600; color: #b2b5ba; }
.d-tabs .on { color: #1b1f24; font-weight: 700; border-bottom: 2px solid #3d4248; }
.d-filter { display: flex; align-items: center; gap: 9px; margin-top: 24px; font-size: 10px; }
.d-search { display: flex; align-items: center; gap: 5px; width: 214px; height: 24px; padding: 0 9px; border: 1px solid #c6c8cc; border-radius: 2px; color: #777; }
.d-search ::placeholder { color: #bbbdc2; }
.d-filter label { display: flex; align-items: center; gap: 8px; }
.d-filter input[type="checkbox"] { width: 11px; height: 11px; border: 1px solid #555; }
.d-table { width: 100%; margin-top: 6px; border-collapse: collapse; table-layout: fixed; text-align: left; font-size: 10px; line-height: 14px; color: #9699a0; }
.c-name { width: 189px; }
.c-tag { width: 104px; }
.c-id { width: 100px; }
.c-created { width: 100px; }
.d-table th { height: 31px; padding: 0 0 7px 12px; border-bottom: 2px solid #e7e8ec; color: #1b1f24; font-size: 9px; font-weight: 600; }
.d-table td { height: 32px; padding: 0 0 0 12px; border-bottom: 2px solid #ecedf1; white-space: nowrap; }
.d-table td:first-child { color: #1b1f24; font-weight: 600; }
.sort { display: inline-block; width: 8px; height: 10px; vertical-align: middle; }
.name-cell { display: flex; justify-content: space-between; align-items: center; padding-right: 11px; }
.inuse { padding: 0 4px; border-radius: 2px; background: #53c9a3; color: #fff; font-size: 7px; line-height: 12px; }
.connect { display: flex; align-items: center; height: 76px; padding: 0 23px 4px; background: #f0f2f5; }
.remote { width: 160px; }
.remote h4 { width: 120px; font-size: 11px; line-height: 17px; font-weight: 600; }
.remote p { display: flex; align-items: center; gap: 12px; margin-top: 8px; color: #777d84; font-size: 10px; }
.connect ul { flex: 1; display: grid; grid-template-columns: 165fr 220fr; gap: 8px 50px; padding: 0 26px 0 2px; color: #70767d; font-size: 10px; line-height: 13px; }
.connect li { display: flex; align-items: center; gap: 5px; }
.signin { width: 58px; height: 38px; padding: 0 18px; border-radius: 2px; background: #007fff; color: #fff; font-size: 9px; }

/* Browser window */
.browser {
  display: flex; flex-direction: column; min-width: 0;
  background: #fff; color: #3c4043;
  font-size: 7px; line-height: 10px;
  box-shadow: 12px 18px 30px rgba(70, 50, 45, .17), 0 0 16px rgba(60, 50, 40, .12);
}
.tabs { display: flex; height: 18px; padding: 2px 6px 0 4px; background: #dee1e6; font-size: 6px; }
.tab { display: flex; align-items: center; gap: 4px; width: 114px; padding: 0 3px 0 5px; border-right: 1px solid #b9bdc3; white-space: nowrap; }
.tab span { flex: 1; }
.tab.on { background: #fff; border: 0; border-radius: 4px 4px 0 0; }
.plus { margin-left: 8px; }
.more { margin-left: auto; align-self: center; }
.toolbar { display: flex; align-items: center; gap: 8px; height: 16px; padding: 0 7px 0 6px; }
.faint { opacity: .4; }
.url { flex: 1; display: flex; align-items: center; gap: 8px; height: 14px; padding: 0 4px 0 3px; border-radius: 7px; background: #f1f3f4; }
.url input { margin-left: -4px; }
.exts { display: flex; align-items: center; gap: 7px; }
.bookmarks { display: flex; align-items: center; height: 17px; padding: 0 7px; white-space: nowrap; font-size: 6px; }
.bookmarks a { display: flex; align-items: center; gap: 4px; }
.apps { width: 24px; }
.bm-xs { width: 36px; }
.bm-s { width: 38px; }
.bm-m { width: 67px; }
.bm-l { width: 72px; }
.bookmarks .read { margin-left: auto; }
.aws-nav { height: 34px; background: #232f3e; color: #fff; font-size: 6px; }
.aws-row { display: flex; align-items: center; height: 19px; padding: 0 9px; }
.aws-logo { font: 700 8px/8px "Open Sans", sans-serif; width: 31px; }
.aws-logo svg { width: 16px; height: 4px; }
.svc { display: flex; align-items: center; gap: 4px; width: 35px; font-weight: 500; }
.aws-search { display: flex; align-items: center; gap: 5px; width: 258px; height: 14px; padding: 0 4px; border: 1px solid #7d8894; background: #0f1419; font-size: 7px; }
.aws-search ::placeholder { color: #b3b8bd; font-style: italic; }
.aws-search kbd { font: inherit; color: #b3b8bd; }
.aws-user { display: flex; align-items: center; gap: 15px; margin-left: auto; font-weight: 500; }
.favs { display: flex; gap: 6px; padding: 2px 9px; font-weight: 700; }
.favs a { display: flex; align-items: center; gap: 2px; }
.aws-body { display: flex; flex: 1; background: #f3f3f3; }
.aws-side { width: 135px; padding: 9px 12px 0 16px; border-right: 1px solid #dcdcdc; background: #fff; color: #444b54; }
.side-head { display: flex; justify-content: space-between; height: 40px; color: #16191f; }
.side-head h3 { width: 90px; font-size: 8px; line-height: 11px; font-weight: 700; }
.side-head svg { margin-top: 1px; }
.aws-side nav { display: flex; flex-direction: column; margin-bottom: 21px; }
.aws-side nav a { display: flex; align-items: center; gap: 2px; height: 14px; }
.aws-side .sub { padding-left: 10px; }
.aws-side .on { color: #ec6a1f; font-weight: 700; }
.aws-main { flex: 1; min-width: 0; padding: 12px 19px 30px 18px; }
.crumbs { display: flex; align-items: center; gap: 4px; color: #6a7076; }
.crumbs a, .images a { color: #2074bd; }
.crumbs svg { color: #999; }
.title-row { display: flex; align-items: center; gap: 6px; height: 26px; margin-top: 5px; }
.title-row h2 { flex: 1; color: #16191f; font-size: 14px; line-height: 20px; }
.btn { width: 32px; height: 15px; border: 1px solid #545b64; background: #fff; color: #444b54; font-size: 6px; font-weight: 700; line-height: 8px; }
.btn:disabled { border-color: #e2e4e6; color: #a5aab0; font-weight: 500; }
.b-wide { width: 60px; }
.b-icon { display: grid; place-items: center; width: 24px; }
.card { margin-top: 9px; background: #fff; box-shadow: 0 1px 2px rgba(0, 0, 0, .35); }
.card-head { padding: 9px 9px 7px; background: #fafafa; }
.card-title { display: flex; align-items: center; gap: 5px; }
.card-title h3 { flex: 1; color: #16191f; font-size: 9px; line-height: 15px; }
.card-title span { color: #687078; font-weight: 400; }
.card-filter { display: flex; justify-content: space-between; margin-top: 16px; }
.find { display: flex; align-items: center; gap: 5px; width: 348px; height: 15px; padding: 0 5px; border: 1px solid #d3d6d9; background: #fff; }
.find ::placeholder { color: #9da2a7; font-style: italic; }
.pager { display: flex; align-items: center; gap: 7px; padding-right: 2px; color: #999; }
.pager b { color: #222; }
.cog { margin-left: 7px; }
.images { width: 100%; border-collapse: collapse; table-layout: fixed; text-align: left; color: #2c3138; }
.a-check { width: 26px; }
.a-tag { width: 111px; }
.a-date { width: 140px; }
.a-size { width: 59px; }
.a-uri { width: 64px; }
.a-sha { width: 194px; }
.a-scan { width: 49px; }
.images th, .images td { padding: 0 0 0 9px; white-space: nowrap; }
.images th { height: 24px; background: #fafafa; border-top: 1px solid #efefef; font-weight: 500; font-size: 7px; color: #545b64; }
.images td { height: 19px; border-top: 1px solid #f3f4f4; }
.images td svg { display: inline-block; vertical-align: middle; margin: 0 3px 0 2px; }
.images input { width: 8px; height: 8px; border: 1px solid #c3c7cb; }
.th-sort { display: flex; align-items: center; justify-content: space-between; padding-right: 10px; }
.aws-foot { display: flex; align-items: center; gap: 13px; height: 13px; padding: 0 10px; background: #232f3e; color: #fff; font-size: 6px; }
.legal { margin-left: auto; }
.downloads { display: flex; align-items: center; height: 28px; padding: 0 6px 0 0; background: #fff; }
.dl { display: flex; align-items: center; gap: 5px; width: 113px; height: 26px; padding: 0 6px 0 9px; border-right: 1px solid #dadce0; white-space: nowrap; }
.dl span { flex: 1; font-size: 6px; }
.all { width: 32px; height: 15px; margin: 0 6px 0 auto; border: 1px solid #e4e6e9; border-radius: 2px; color: #1a73e8; font-weight: 500; font-size: 6px; line-height: 8px; }
```
